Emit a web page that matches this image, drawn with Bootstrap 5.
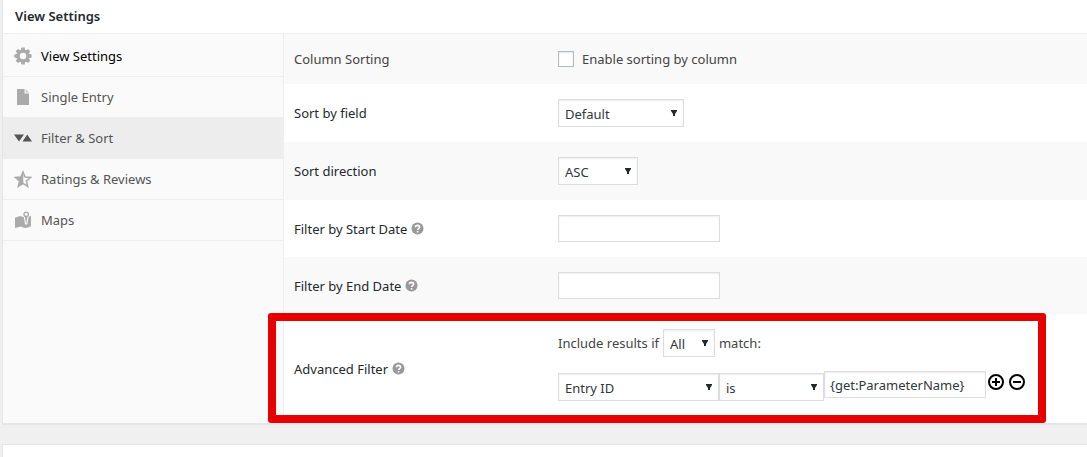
<!DOCTYPE html>
<html lang="en">
<head>
<meta charset="utf-8">
<meta name="viewport" content="width=device-width, initial-scale=1">
<title>View Settings</title>
<link href="https://cdn.jsdelivr.net/npm/bootstrap@5.3.0/dist/css/bootstrap.min.css" rel="stylesheet">
<style>
body { background: #f0f0f0; font-family: "Noto Sans", "Open Sans", sans-serif; font-size: 13px; line-height: 20px; color: #444; }
main { padding-left: 2px; gap: 20px; }
.metabox { background: #fff; border: 1px solid #e5e5e5; border-width: 1px 0 1px 1px; box-shadow: 0 1px 1px rgba(0,0,0,.04); }
.metabox.first { border-top: 0; }
.metabox.next { border-bottom: 0; }
.box-title { font-size: 13px; line-height: 20px; font-weight: 600; color: #23282d; padding: 6px 12px 7px; border-bottom: 1px solid #eee; }
.side { width: 281px; background: #fafafa; border-right: 1px solid #eee; padding-top: 2px; }
.side a { height: 41px; gap: 9px; padding: 0 11px; color: #555; border-bottom: 1px solid #eee; }
.side a.current { color: #000; }
.side a.active { background: #ededed; }
.side svg { width: 18px; height: 18px; fill: #aaa; flex: none; }
.side a.active svg { fill: #555; }
.setting { padding: 15px 10px; }
.setting:nth-child(odd) { background: #f9f9f9; }
.setting-name { width: 264px; color: #23282d; }
.setting-name.plain { color: #444; }
.help { width: 13px; height: 13px; }
.field { height: 27px; width: 162px; border: 1px solid #ddd; background: #fff; box-shadow: inset 0 1px 2px rgba(0,0,0,.07); padding: 0 5px; color: #32373c; border-radius: 0; }
select.field { height: 28px; padding: 1px 18px 0 6px; appearance: none; background: #fff url("data:image/svg+xml,%3Csvg xmlns='http://www.w3.org/2000/svg' width='6' height='7'%3E%3Cpath d='M0 0h6v1L4 4v2H2V4L0 1z' fill='%2323282d'/%3E%3C/svg%3E") no-repeat right 6px top 10px; }
select.w-field { width: 126px; }
select.w-dir { width: 80px; }
select.w-mode { width: 52px; }
select.w-key { width: 161px; }
select.w-op { width: 105px; }
.tick { appearance: none; width: 16px; height: 16px; border: 1px solid #b4b9be; background: #fff; box-shadow: inset 0 1px 2px rgba(0,0,0,.1); }
.tick:checked { background: #1e8cbe; }
.setting.advanced { padding-top: 0; padding-bottom: 0; background: #fff; }
.conditions { padding: 15px 0 22px; gap: 14px; }
.condition { height: 30px; }
.condition select { margin-top: 2px; }
.highlight { left: -16px; right: 41px; top: -1px; bottom: 0; border: 8px solid #e60000; border-radius: 3px; pointer-events: none; }
.condition-buttons { gap: 5px; padding: 3px 0 0 2px; }
</style>
</head>
<body>
<main class="d-flex flex-column min-vh-100">
<section class="metabox first">
  <h2 class="box-title m-0">View Settings</h2>
  <div class="d-flex">
    <nav class="side flex-shrink-0" aria-label="Settings sections">
      <a href="#view" class="current d-flex align-items-center text-decoration-none">
        <svg viewBox="0 0 18 18"><path fill-rule="evenodd" d="M7.300.5h3.400l.4 2.300 1 .4 1.900-1.300 2.300 2.300-1.300 1.900.4 1 2.300.4v3l-2.300.4-.4 1 1.300 1.900-2.300 2.300-1.900-1.300-1 .4-.4 2.300H7.300l-.4-2.300-1-.4L4 16.100l-2.300-2.300L3 11.900l-.4-1-2.300-.4v-3l2.300-.4.4-1-1.300-1.900L4 1.900l1.900 1.300 1-.4zM9 5.800a3.200 3.200 0 1 0 0 6.400 3.200 3.200 0 0 0 0-6.400z"/></svg>View Settings</a>
      <a href="#single" class="d-flex align-items-center text-decoration-none">
        <svg viewBox="0 0 18 18"><path d="M3 1h7.500v4.500H15V17H3z"/><path d="M11.500 1L15 4.500h-3.500z" fill="#ccc"/></svg>Single Entry</a>
      <a href="#filter" class="active d-flex align-items-center text-decoration-none" aria-current="page">
        <svg viewBox="0 0 18 18"><path d="M0 5.500h10L5 12.500zM8.500 12.500h9.500L13.200 5.500z"/></svg>Filter &amp; Sort</a>
      <a href="#ratings" class="d-flex align-items-center text-decoration-none">
        <svg viewBox="0 0 18 18"><path d="M9 2l2.100 5.100 5.400.4-4.100 3.500 1.300 5.300L9 13.400l-4.700 2.900L5.600 11 1.500 7.500l5.400-.4z" fill="none" stroke="#aaa" stroke-width="1.500"/><path d="M9.300 1v12.600l-5 2.900L5.600 11 1.300 7.300l5.600-.3z"/></svg>Ratings &amp; Reviews</a>
      <a href="#maps" class="d-flex align-items-center text-decoration-none">
        <svg viewBox="0 0 18 18"><path d="M1 6.700l5-1.700 5.500 1.800L17 5v10.300l-5.500 1.900L6.500 15.400 1 17z"/><path d="M10.300 5.500L11.600 13h1.200l1.300-7.500" stroke="#fafafa" stroke-width="1.200"/><circle cx="12.200" cy="3.300" r="2.200" fill="#fafafa" stroke="#aaa" stroke-width="1.400"/></svg>Maps</a>
    </nav>
    <form class="flex-grow-1">
      <div class="setting d-flex align-items-center">
        <div class="setting-name plain flex-shrink-0">Column Sorting</div>
        <div class="d-flex align-items-center gap-2"><input type="checkbox" class="tick m-0" id="sorting"><label for="sorting">Enable sorting by column</label></div>
      </div>
      <div class="setting d-flex align-items-center">
        <label class="setting-name flex-shrink-0" for="sort-field">Sort by field</label>
        <select class="field w-field" id="sort-field"><option>Default</option></select>
      </div>
      <div class="setting d-flex align-items-center">
        <label class="setting-name flex-shrink-0" for="sort-dir">Sort direction</label>
        <select class="field w-dir" id="sort-dir"><option>ASC</option><option>DESC</option></select>
      </div>
      <div class="setting d-flex align-items-center">
        <label class="setting-name flex-shrink-0 d-flex align-items-center gap-1" for="start">Filter by Start Date
          <svg class="help" viewBox="0 0 13 13"><circle cx="6.500" cy="6.500" r="6" fill="#999"/><path d="M4.400 5.200c0-2.500 4.200-2.500 4.200 0 0 1.400-2 1.300-2 2.700M6.600 9v1.500" fill="none" stroke="#fff" stroke-width="1.600"/></svg></label>
        <input type="text" class="field" id="start">
      </div>
      <div class="setting d-flex align-items-center">
        <label class="setting-name flex-shrink-0 d-flex align-items-center gap-1" for="end">Filter by End Date
          <svg class="help" viewBox="0 0 13 13"><circle cx="6.500" cy="6.500" r="6" fill="#999"/><path d="M4.400 5.200c0-2.500 4.200-2.500 4.200 0 0 1.400-2 1.300-2 2.700M6.600 9v1.500" fill="none" stroke="#fff" stroke-width="1.600"/></svg></label>
        <input type="text" class="field" id="end">
      </div>
      <div class="setting advanced d-flex align-items-center position-relative">
        <label class="setting-name flex-shrink-0 d-flex align-items-center gap-1" for="mode">Advanced Filter
          <svg class="help" viewBox="0 0 13 13"><circle cx="6.500" cy="6.500" r="6" fill="#999"/><path d="M4.400 5.200c0-2.500 4.200-2.500 4.200 0 0 1.400-2 1.300-2 2.700M6.600 9v1.500" fill="none" stroke="#fff" stroke-width="1.600"/></svg></label>
        <div class="conditions d-flex flex-column">
          <div class="d-flex align-items-center gap-1">Include results if
            <select class="field w-mode" id="mode"><option>All</option><option>Any</option></select> match:</div>
          <div class="condition d-flex align-items-start">
            <select class="field w-key" aria-label="Field"><option>Entry ID</option></select>
            <select class="field w-op" aria-label="Operator"><option>is</option><option>is not</option></select>
            <input type="text" class="field" aria-label="Value" value="{get:ParameterName}">
            <div class="condition-buttons d-flex">
              <button type="button" class="btn border-0 p-0 d-flex" aria-label="Add condition"><svg width="16" height="16" viewBox="0 0 16 16" fill="none" stroke="#000" stroke-width="2"><circle cx="8" cy="8" r="7"/><path d="M4 8h8M8 4v8"/></svg></button>
              <button type="button" class="btn border-0 p-0 d-flex" aria-label="Remove condition"><svg width="16" height="16" viewBox="0 0 16 16" fill="none" stroke="#000" stroke-width="2"><circle cx="8" cy="8" r="7"/><path d="M4 8h8"/></svg></button>
            </div>
          </div>
        </div>
        <div class="highlight position-absolute"></div>
      </div>
    </form>
  </div>
</section>
<section class="metabox next flex-grow-1" aria-label="More settings"></section>
</main>
<script src="https://cdn.jsdelivr.net/npm/bootstrap@5.3.0/dist/js/bootstrap.bundle.min.js"></script>
</body>
</html>
